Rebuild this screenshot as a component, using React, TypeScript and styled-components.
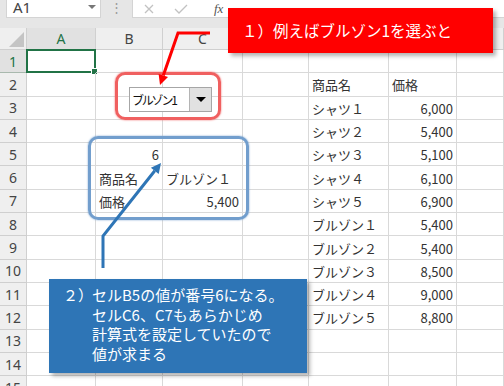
import styled, { createGlobalStyle } from "styled-components";

const GlobalStyle = createGlobalStyle`
  html, body {
    margin: 0;
    padding: 0;
    background: #fff;
  }
  body {
    overflow: hidden;
  }
`;

const JP = `"Noto Sans CJK JP", "Noto Sans", sans-serif`;
const UI = `"Noto Sans", "Liberation Sans", sans-serif`;

const Screen = styled.div`
  position: relative;
  width: 504px;
  height: 386px;
  overflow: hidden;
  background: #fff;
  font-family: ${JP};
`;

/* ---------- formula bar ---------- */

const TopBar = styled.div`
  display: flex;
  align-items: flex-start;
  height: 28px;
  padding-left: 6px;
  box-sizing: border-box;
  background: #e6e6e6;
`;

const NameBox = styled.div`
  display: flex;
  align-items: center;
  justify-content: space-between;
  width: 95px;
  height: 18px;
  padding: 0 4px 3px 6px;
  box-sizing: border-box;
  background: #fff;
  border: 1px solid #d4d4d4;
  border-top: none;
  font: 15px ${UI};
  color: #444;
`;

const Caret = styled.span`
  width: 0;
  height: 0;
  border-left: 4px solid transparent;
  border-right: 4px solid transparent;
  border-top: 4px solid #777;
`;

const Dots = styled.div`
  width: 31px;
  text-align: center;
  font: 13px ${UI};
  line-height: 14px;
  color: #9a9a9a;
`;

const FormulaBox = styled.div`
  flex: 1;
  display: flex;
  align-items: center;
  height: 18px;
  padding-left: 11px;
  gap: 20px;
  box-sizing: border-box;
  background: #fff;
  border: 1px solid #d4d4d4;
  border-top: none;
  border-right: none;
`;

const Fx = styled.span`
  margin-left: 6px;
  font: italic 13px "Liberation Serif", serif;
  color: #555;
`;

/* ---------- sheet ---------- */

const Sheet = styled.div`
  display: grid;
  grid-template-columns: 27px 69px 67px 80px 66px 80px 68px 1fr;
  grid-template-rows: 22px repeat(15, 23.3px);
`;

const Corner = styled.div`
  position: relative;
  background: #efefef;
  border-right: 1px solid #cfcfcf;
  border-bottom: 1px solid #cfcfcf;
  &::after {
    content: "";
    position: absolute;
    right: 2px;
    bottom: 2px;
    width: 0;
    height: 0;
    border-left: 15px solid transparent;
    border-bottom: 15px solid #c4c4c4;
  }
`;

const Header = styled.div<{ $sel?: boolean }>`
  display: flex;
  align-items: center;
  justify-content: center;
  box-sizing: border-box;
  background: ${(p) => (p.$sel ? "#e1e1e1" : "#efefef")};
  border-right: 1px solid #d0d0d0;
  border-bottom: 1px solid ${(p) => (p.$sel ? "#a9b9ae" : "#cfcfcf")};
  font: 14px ${UI};
  color: ${(p) => (p.$sel ? "#217346" : "#444")};
`;

const Cell = styled.div<{ $right?: boolean; $sel?: boolean }>`
  position: relative;
  display: flex;
  align-items: center;
  justify-content: ${(p) => (p.$right ? "flex-end" : "flex-start")};
  padding: 1px 3px 0 3px;
  box-sizing: border-box;
  border-right: 1px solid #d9d9d9;
  border-bottom: 1px solid #d9d9d9;
  font-size: 13px;
  color: #333;
  white-space: nowrap;
  ${(p) =>
    p.$sel &&
    `
    border: 2px solid #217346;
    margin: -1px 0 0 -1px;
  `}
`;

const Handle = styled.span`
  position: absolute;
  right: -4px;
  bottom: -4px;
  width: 5px;
  height: 5px;
  background: #217346;
  border: 1px solid #fff;
`;

/* ---------- overlays ---------- */

const Arrows = styled.svg`
  position: absolute;
  left: 0;
  top: 0;
  pointer-events: none;
`;

const Callout = styled.div<{ $bg: string }>`
  position: absolute;
  box-sizing: border-box;
  background: ${(p) => p.$bg};
  color: #fff;
  font-size: 15px;
  box-shadow: 3px 3px 4px rgba(0, 0, 0, 0.3);
`;

const RedCallout = styled(Callout)`
  left: 228px;
  top: 8px;
  width: 265px;
  height: 45px;
  display: flex;
  align-items: center;
  padding-left: 14px;
  padding-bottom: 2px;
  font-size: 15.5px;
`;

const BlueCallout = styled(Callout)`
  left: 49px;
  top: 279px;
  width: 258px;
  height: 94px;
  display: flex;
  padding: 6px 0 0 14px;
  line-height: 19.5px;
`;

const Marker = styled.span`
  width: 29px;
  flex: none;
`;

const Frame = styled.div<{ $color: string }>`
  position: absolute;
  box-sizing: border-box;
  border: 3px solid ${(p) => p.$color};
  border-radius: 10px;
  box-shadow: 0 0 2px ${(p) => p.$color};
`;

const RedFrame = styled(Frame)`
  left: 115px;
  top: 72px;
  width: 106px;
  height: 48px;
`;

const BlueFrame = styled(Frame)`
  left: 88px;
  top: 136px;
  width: 161px;
  height: 84px;
`;

const Combo = styled.div`
  position: absolute;
  left: 129px;
  top: 87px;
  width: 83px;
  height: 25px;
  display: flex;
  box-sizing: border-box;
  background: #fff;
  border: 1px solid #a6a6a6;
`;

const ComboText = styled.span`
  flex: 1;
  display: flex;
  align-items: center;
  padding-left: 2px;
  font-size: 12px;
  letter-spacing: -2.2px;
  color: #111;
`;

const ComboButton = styled.span`
  width: 21px;
  display: flex;
  align-items: center;
  justify-content: center;
  background: #e1e1e1;
  border-left: 1px solid #b4b4b4;
  &::after {
    content: "";
    border-left: 5px solid transparent;
    border-right: 5px solid transparent;
    border-top: 5px solid #000;
  }
`;

const COLS = ["A", "B", "C", "D", "E", "F", "G"];

const cells: Record<string, string> = {
  E2: "商品名",
  F2: "価格",
  B5: "6",
  B6: "商品名",
  C6: "ブルゾン１",
  B7: "価格",
  C7: "5,400",
};

const products: [string, string][] = [
  ["シャツ１", "6,000"],
  ["シャツ２", "5,400"],
  ["シャツ３", "5,100"],
  ["シャツ４", "6,100"],
  ["シャツ５", "6,900"],
  ["ブルゾン１", "5,400"],
  ["ブルゾン２", "5,400"],
  ["ブルゾン３", "8,500"],
  ["ブルゾン４", "9,000"],
  ["ブルゾン５", "8,800"],
];
products.forEach(([name, price], i) => {
  cells[`E${i + 3}`] = name;
  cells[`F${i + 3}`] = price;
});

const isNumber = (v: string) => /^[\d,]+$/.test(v);

export default function App() {
  const rows = Array.from({ length: 15 }, (_, i) => i + 1);
  return (
    <Screen>
      <GlobalStyle />
      <TopBar>
        <NameBox>
          A1
          <Caret />
        </NameBox>
        <Dots>⋮</Dots>
        <FormulaBox>
          <svg width="10" height="10" viewBox="0 0 10 10">
            <path d="M1 1L9 9M9 1L1 9" stroke="#c2c2c2" strokeWidth="1.3" />
          </svg>
          <svg width="14" height="10" viewBox="0 0 14 10">
            <path d="M1 5L5 9L13 1" stroke="#c2c2c2" strokeWidth="1.3" fill="none" />
          </svg>
          <Fx>fx</Fx>
        </FormulaBox>
      </TopBar>

      <Sheet>
        <Corner />
        {COLS.map((c) => (
          <Header key={c} $sel={c === "A"}>
            {c}
          </Header>
        ))}
        {rows.map((r) => (
          <>
            <Header key={`h${r}`} $sel={r === 1}>
              {r}
            </Header>
            {COLS.map((c) => {
              const v = cells[`${c}${r}`] ?? "";
              const sel = c === "A" && r === 1;
              return (
                <Cell key={`${c}${r}`} $right={isNumber(v)} $sel={sel}>
                  {v}
                  {sel && <Handle />}
                </Cell>
              );
            })}
          </>
        ))}
      </Sheet>

      <RedFrame $color="#f06060" />
      <Combo>
        <ComboText>ブルゾン1</ComboText>
        <ComboButton />
      </Combo>
      <BlueFrame $color="#729ecd" />

      <Arrows width="504" height="386" viewBox="0 0 504 386">
        <polyline points="210,33 178,33 163.3,75.5" stroke="#ff0000" strokeWidth="3" fill="none" />
        <polygon points="160,85 168,77.1 158.6,73.9" fill="#ff0000" />
        <polyline points="103,268 103,236 154.8,170.8" stroke="#2e75b6" strokeWidth="3" fill="none" />
        <polygon points="161,163 158.7,173.9 150.9,167.7" fill="#2e75b6" />
      </Arrows>

      <RedCallout $bg="#ff0000">１）例えばブルゾン1を選ぶと</RedCallout>
      <BlueCallout $bg="#2e75b6">
        <Marker>２）</Marker>
        <div>
          セルB5の値が番号6になる。
          <br />
          セルC6、C7もあらかじめ
          <br />
          計算式を設定していたので
          <br />
          値が求まる
        </div>
      </BlueCallout>
    </Screen>
  );
}
